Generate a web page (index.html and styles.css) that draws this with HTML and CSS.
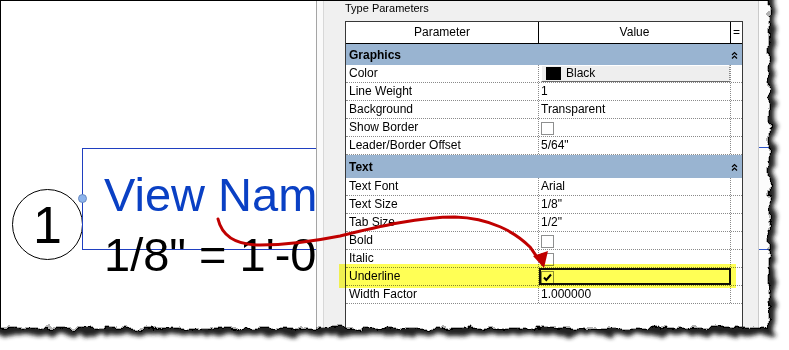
FILE: index.html
```html
<!DOCTYPE html>
<html lang="en">
<head>
  <meta charset="UTF-8" />
  <title>Type Parameters</title>
  <link rel="stylesheet" href="styles.css">
</head>
<body>
  <div class="shot">

    <!-- Drawing canvas with the view title -->
    <div class="canvas">
      <div class="tag">1</div>
      <div class="title-box">
        <div class="name">View Name</div>
        <div class="scale">1/8" = 1'-0"</div>
        <span class="grip"></span>
      </div>
    </div>

    <div class="splitter"></div>

    <!-- Properties palette -->
    <div class="props">
      <div class="caption">Type Parameters</div>
      <div class="grid">
        <div class="head">
          <div>Parameter</div>
          <div>Value</div>
          <div>=</div>
        </div>

        <div class="group">
          <span>Graphics</span>
          <svg class="fold" width="7" height="8" viewBox="0 0 7 8"><path d="M1 4 L3.5 1.5 L6 4 M1 7.5 L3.5 5 L6 7.5" fill="none" stroke="#000" stroke-width="1.2"/></svg>
        </div>
        <div class="row">
          <div>Color</div>
          <div class="val-btn"><div class="btn"><span class="swatch"></span>Black</div></div>
          <div></div>
        </div>
        <div class="row"><div>Line Weight</div><div>1</div><div></div></div>
        <div class="row"><div>Background</div><div>Transparent</div><div></div></div>
        <div class="row"><div>Show Border</div><div><span class="check"></span></div><div></div></div>
        <div class="row"><div>Leader/Border Offset</div><div>5/64"</div><div></div></div>

        <div class="group tall">
          <span>Text</span>
          <svg class="fold" width="7" height="8" viewBox="0 0 7 8"><path d="M1 4 L3.5 1.5 L6 4 M1 7.5 L3.5 5 L6 7.5" fill="none" stroke="#000" stroke-width="1.2"/></svg>
        </div>
        <div class="row"><div>Text Font</div><div>Arial</div><div></div></div>
        <div class="row"><div>Text Size</div><div>1/8"</div><div></div></div>
        <div class="row"><div>Tab Size</div><div>1/2"</div><div></div></div>
        <div class="row"><div>Bold</div><div><span class="check"></span></div><div></div></div>
        <div class="row"><div>Italic</div><div><span class="check"></span></div><div></div></div>
        <div class="row">
          <div>Underline</div>
          <div class="focus"><span class="check"><svg width="11" height="11" viewBox="0 0 11 11"><path d="M2 5.5 L4.3 8 L9 2.5" fill="none" stroke="#000" stroke-width="2"/></svg></span></div>
          <div></div>
        </div>
        <div class="row"><div>Width Factor</div><div>1.000000</div><div></div></div>
      </div>
    </div>

    <div class="peek"></div>
  </div>

  <!-- callout highlight and arrow -->
  <div class="mark"></div>

  <svg class="arrow" width="789" height="350">
    <path d="M218,219 C222,236 236,245 260,245 C285,245 310,242 340,236 C380,226 420,217 455,217 C490,218 515,232 530,247 L537,257" fill="none" stroke="#c00000" stroke-width="3" stroke-linecap="round"/>
    <polygon points="533,256 548,251 544,268" fill="#c00000"/>
  </svg>

  <!-- torn paper edge -->
  <svg class="torn" width="789" height="350">
    <defs>
      <filter id="rough" filterUnits="userSpaceOnUse" x="-40" y="-40" width="880" height="440">
        <feTurbulence type="fractalNoise" baseFrequency="0.09" numOctaves="4" seed="5"/>
        <feDisplacementMap in="SourceGraphic" scale="9" xChannelSelector="R" yChannelSelector="G"/>
      </filter>
      <filter id="soft" filterUnits="userSpaceOnUse" x="-40" y="-40" width="880" height="440">
        <feGaussianBlur stdDeviation="2.3"/>
      </filter>
      <mask id="outer" maskUnits="userSpaceOnUse" x="0" y="0" width="789" height="350">
        <rect width="789" height="350" fill="#fff"/>
        <rect x="-20" y="-20" width="790" height="349" fill="#000" filter="url(#rough)"/>
      </mask>
      <mask id="outerIn" maskUnits="userSpaceOnUse" x="0" y="0" width="789" height="350">
        <rect width="789" height="350" fill="#fff"/>
        <rect x="-20" y="-20" width="788.7" height="347.7" fill="#000" filter="url(#rough)"/>
      </mask>
    </defs>
    <rect width="789" height="350" fill="#000" mask="url(#outerIn)"/>
    <rect width="789" height="350" fill="#fff" mask="url(#outer)"/>
    <g mask="url(#outer)">
      <g filter="url(#soft)">
        <rect x="-15" y="-14" width="790" height="349" fill="#222" filter="url(#rough)"/>
      </g>
    </g>
  </svg>
</body>
</html>
```

FILE: styles.css
```css
body        {margin:0; width:789px; height:350px; overflow:hidden; position:relative; background:#fff; font-family:"Liberation Sans", Arial, sans-serif;}

.shot       {display:flex; width:775px; height:336px; box-sizing:border-box; border-top:1px solid #000; border-left:1px solid #000; overflow:hidden;}

/* canvas */
.canvas     {flex:none; width:315px; box-sizing:border-box; padding:147px 0 0 11px; display:flex; align-items:flex-start; overflow:hidden; background:#fff;}
.tag        {flex:none; width:71px; height:71px; margin-top:41px; box-sizing:border-box; border:1px solid #000; border-radius:50%; display:flex; align-items:center; justify-content:center; font-size:52px; line-height:1;}
.title-box  {flex:none; position:relative; width:260px; height:102px; margin-left:-1px; box-sizing:border-box; border:1px solid #1f3fc0; border-right:0; padding:22px 0 0 21px;}
.name       {font-size:47px; line-height:48px; color:#0a40c4; white-space:nowrap;}
.scale      {font-size:47px; line-height:48px; margin-top:12px; color:#000; white-space:nowrap;}
.grip       {position:absolute; left:-5px; top:45px; width:9px; height:9px; box-sizing:border-box; border-radius:50%; background:#8db4ec; border:1px solid #6a8cc4;}

.splitter   {flex:none; width:8px; box-sizing:border-box; border-left:1px solid #a5a5a5; border-right:1px solid #d8d8d8; background:#fafafa;}

/* properties palette */
.props      {flex:none; width:434px; box-sizing:border-box; padding-left:21px; background:#f0f0f0;}
.caption    {height:14px; line-height:14px; margin-bottom:6px; font-size:11px; color:#000;}
.grid       {width:398px; height:340px; box-sizing:border-box; border:1px solid #383838; border-bottom:0; background:#fff; font-size:12px; color:#000;}

.head       {display:grid; grid-template-columns:193px 192px 11px; height:22px; box-sizing:border-box; border-bottom:1px solid #000; line-height:21px;}
.head div   {text-align:center; border-right:1px solid #000;}
.head div:last-child {border-right:0;}

.group      {display:flex; justify-content:space-between; align-items:center; height:21px; box-sizing:border-box; padding:1px 4px 0 3px; background:#99b4d1; font-weight:bold;}
.group.tall {height:23px;}
.fold       {display:block;}

.row        {display:grid; grid-template-columns:193px 192px 11px; height:18px; box-sizing:border-box; border-bottom:1px dotted #8a8a8a; line-height:17px;}
.row div    {white-space:nowrap; overflow:hidden;}
.row div:nth-child(1) {padding-left:3px; border-right:1px dotted #8a8a8a;}
.row div:nth-child(2) {padding-left:2px; border-right:1px dotted #8a8a8a;}
.row .val-btn {padding-left:0;}

.btn        {display:flex; align-items:center; height:17px; box-sizing:border-box; border:1px solid; border-color:#fff #6b6b6b #6b6b6b #fff; background:#eeeeee;}
.swatch     {width:15px; height:13px; margin:0 5px 0 1px; background:#000;}

.check      {display:block; width:13px; height:13px; margin-top:3px; box-sizing:border-box; border:1px solid #8e8f8f; background:#fff;}
.check svg  {display:block;}
.row .focus {outline:2px solid #111; outline-offset:-2px;}

.peek       {flex:1; border-left:1px solid #cacaca; background:#fcfcfc; background-image:linear-gradient(#2a52c8, #2a52c8), linear-gradient(#2a52c8, #2a52c8); background-position:0 146px, 0 248px; background-size:100% 1px; background-repeat:no-repeat;}

/* overlays */
.mark       {position:absolute; left:339px; top:264px; width:397px; height:24px; background:#ffff55; mix-blend-mode:multiply;}
.arrow      {position:absolute; left:0; top:0;}
.torn       {position:absolute; left:0; top:0;}
```
